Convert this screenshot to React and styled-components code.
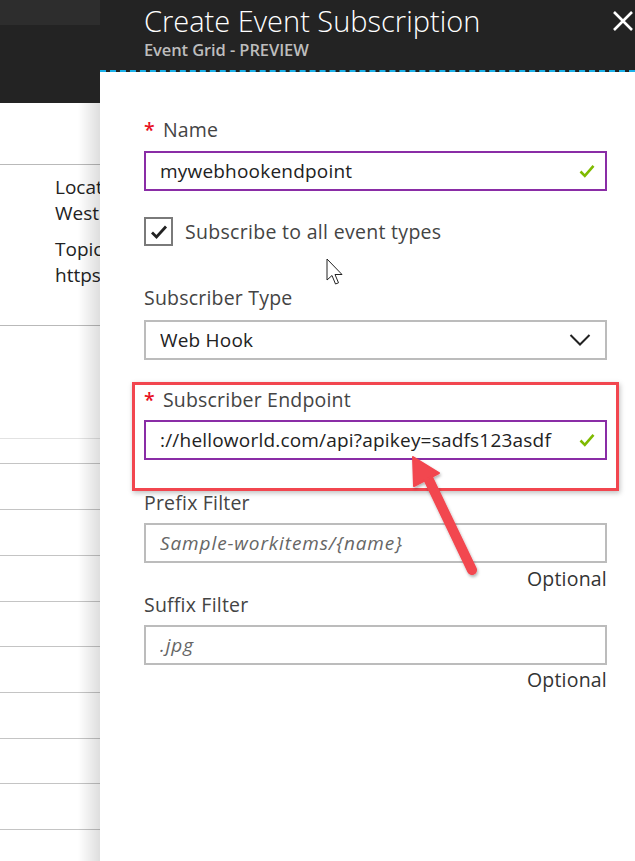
import React from "react";
import styled, { createGlobalStyle } from "styled-components";

const GlobalStyle = createGlobalStyle`
  html, body {
    margin: 0;
    padding: 0;
    background: #fff;
    font-family: "Open Sans", "Noto Sans", sans-serif;
  }
`;

const Page = styled.div`
  position: relative;
  display: flex;
  width: 635px;
  height: 861px;
  overflow: hidden;
  background: #fff;
`;

const Behind = styled.div`
  position: relative;
  width: 100px;
  flex-shrink: 0;
  overflow: hidden;
  &::after {
    content: "";
    position: absolute;
    top: 103px;
    right: 0;
    bottom: 0;
    width: 22px;
    background: linear-gradient(to right, rgba(0, 0, 0, 0), rgba(0, 0, 0, 0.13));
  }
`;

const TopStrip = styled.div`
  height: 25px;
  background: #2d2d2d;
`;

const DarkBand = styled.div`
  height: 78px;
  background: #232323;
`;

const InfoBlock = styled.div`
  box-sizing: border-box;
  margin-top: 61px;
  height: 162px;
  border-top: 1px solid #b9b9b9;
  border-bottom: 1px solid #b9b9b9;
  padding: 9px 0 0 55px;
  white-space: nowrap;
  font-size: 19px;
  color: #222;
`;

const InfoLine = styled.div`
  line-height: 26px;
  margin-bottom: ${(p) => p.$gap || 0}px;
`;

const GridRow = styled.div`
  height: ${(p) => p.$h || 44}px;
  border-bottom: 1px solid ${(p) => (p.$light ? "#e2e2e2" : "#c4c4c4")};
`;

const Blade = styled.div`
  flex: 1;
  display: flex;
  flex-direction: column;
  background: #fff;
`;

const Header = styled.div`
  position: relative;
  box-sizing: border-box;
  height: 72px;
  background: #232323;
  border-bottom: 2px dashed #1ab0e8;
  padding-left: 44px;
`;

const Title = styled.div`
  padding-top: 1px;
  font-size: 29px;
  font-weight: 300;
  color: #fff;
  line-height: 39px;
  white-space: nowrap;
`;

const Subtitle = styled.div`
  font-size: 16.5px;
  font-weight: 600;
  color: #bdbdbd;
  line-height: 19px;
  letter-spacing: -0.1px;
`;

const Close = styled.svg`
  position: absolute;
  top: 10px;
  right: 1px;
`;

const Form = styled.div`
  position: relative;
  display: flex;
  flex-direction: column;
  padding: 46px 28px 0 44px;
`;

const Label = styled.div`
  height: 24px;
  line-height: 24px;
  font-size: 19.5px;
  letter-spacing: 0.2px;
  color: #444;
  margin-top: ${(p) => p.$mt || 0}px;
  white-space: nowrap;
`;

const Star = styled.span`
  color: #e81123;
  margin-right: 8px;
  font-weight: 600;
`;

const Field = styled.div`
  height: 40px;
  box-sizing: border-box;
  margin-top: ${(p) => p.$mt || 8}px;
  border: 2px solid ${(p) => (p.$active ? "#8a2da6" : "#bcbcbc")};
  display: flex;
  align-items: center;
  padding: 0 10px 0 14px;
  font-size: 19px;
  letter-spacing: ${(p) => (p.$placeholder ? "0.9px" : "0.2px")};
  color: ${(p) => (p.$placeholder ? "#666" : "#222")};
  font-style: ${(p) => (p.$placeholder ? "italic" : "normal")};
  white-space: nowrap;
`;

const FieldText = styled.span`
  flex: 1;
  overflow: hidden;
`;

const CheckRow = styled.div`
  display: flex;
  align-items: center;
  gap: 12px;
  margin-top: 26px;
  height: 29px;
  font-size: 19.5px;
  letter-spacing: 0.3px;
  color: #444;
`;

const Box = styled.div`
  width: 29px;
  height: 29px;
  box-sizing: border-box;
  border: 2px solid #7a7a7a;
  display: flex;
  align-items: center;
  justify-content: center;
`;

const Highlight = styled.div`
  margin: 22px -12px 0;
  padding: 3px 9px 28px;
  border: 3px solid #f2464f;
  box-shadow: 1px 2px 5px rgba(0, 0, 0, 0.25);
`;

const Hint = styled.div`
  margin-top: ${(p) => p.$mt || 4}px;
  height: 24px;
  line-height: 24px;
  text-align: right;
  font-size: 19.5px;
  letter-spacing: 0.2px;
  color: #333;
`;

const Pointer = styled.svg`
  position: absolute;
  left: 326px;
  top: 258px;
`;

const Arrow = styled.svg`
  position: absolute;
  left: 400px;
  top: 450px;
`;

const Tick = () => (
  <svg width="16" height="16" viewBox="0 0 16 16">
    <path d="M1.5 8.5 L5.8 12.8 L14.5 2.8" fill="none" stroke="#7fba00" strokeWidth="2.6" />
  </svg>
);

export default function App() {
  const rows = [45, 45, 45, 44, 45, 45, 44, 45];
  return (
    <Page>
      <GlobalStyle />
      <Behind>
        <TopStrip />
        <DarkBand />
        <InfoBlock>
          <InfoLine>Location</InfoLine>
          <InfoLine $gap={10}>West US 2</InfoLine>
          <InfoLine>Topic Endpoint</InfoLine>
          <InfoLine>https://mytopic.westus2.eventgrid.azure.net</InfoLine>
        </InfoBlock>
        <GridRow $h={112} $light />
        <GridRow $h={24} />
        {rows.map((h, i) => (
          <GridRow key={i} $h={h} />
        ))}
      </Behind>
      <Blade>
        <Header>
          <Title>Create Event Subscription</Title>
          <Subtitle>Event Grid - PREVIEW</Subtitle>
          <Close width="22" height="22" viewBox="0 0 22 22">
            <path d="M2 2 L20 20 M20 2 L2 20" stroke="#fff" strokeWidth="2.6" />
          </Close>
        </Header>
        <Form>
          <Label>
            <Star>*</Star>Name
          </Label>
          <Field $active $mt={9}>
            <FieldText>mywebhookendpoint</FieldText>
            <Tick />
          </Field>
          <CheckRow>
            <Box>
              <svg width="18" height="16" viewBox="0 0 18 16">
                <path d="M2 8.5 L6.5 13 L16 2.5" fill="none" stroke="#222" strokeWidth="2.8" />
              </svg>
            </Box>
            Subscribe to all event types
          </CheckRow>
          <Label $mt={40}>Subscriber Type</Label>
          <Field $mt={10}>
            <FieldText>Web Hook</FieldText>
            <svg width="22" height="14" viewBox="0 0 22 14" style={{ marginRight: 4 }}>
              <path d="M1.5 2 L11 11.5 L20.5 2" fill="none" stroke="#222" strokeWidth="2" />
            </svg>
          </Field>
          <Highlight>
            <Label>
              <Star>*</Star>Subscriber Endpoint
            </Label>
            <Field $active>
              <FieldText>://helloworld.com/api?apikey=sadfs123asdf</FieldText>
              <Tick />
            </Field>
          </Highlight>
          <Label>Prefix Filter</Label>
          <Field $placeholder>
            <FieldText>Sample-workitems/{"{name}"}</FieldText>
          </Field>
          <Hint>Optional</Hint>
          <Label $mt={2}>Suffix Filter</Label>
          <Field $placeholder>
            <FieldText>.jpg</FieldText>
          </Field>
          <Hint $mt={3}>Optional</Hint>
        </Form>
      </Blade>
      <Pointer width="20" height="30" viewBox="0 0 20 30">
        <path d="M1 1 L1 22 L6 17.5 L9.5 26 L12.5 24.8 L9 16.5 L16 16.5 Z" fill="#fff" stroke="#222" strokeWidth="1" />
      </Pointer>
      <Arrow width="90" height="135" viewBox="0 0 90 135">
        <defs>
          <filter id="sh" x="-20%" y="-20%" width="140%" height="140%">
            <feDropShadow dx="1" dy="2" stdDeviation="1.5" floodColor="#000" floodOpacity="0.3" />
          </filter>
        </defs>
        <g filter="url(#sh)">
          <path d="M28 28 L72 120" stroke="#f2464f" strokeWidth="10" strokeLinecap="round" />
          <path d="M13 7 L39 23 L14 36 Z" fill="#f2464f" stroke="#f2464f" strokeWidth="2" strokeLinejoin="round" />
        </g>
      </Arrow>
    </Page>
  );
}
